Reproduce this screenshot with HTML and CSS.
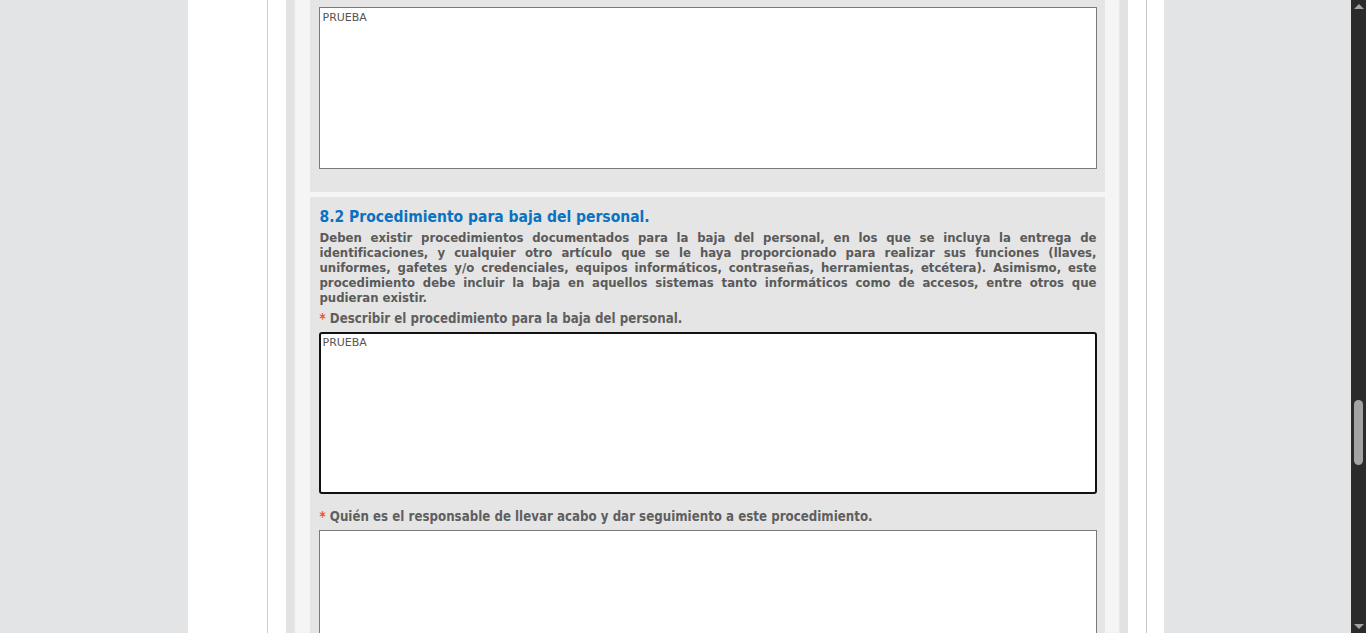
FILE: index.html
```html
<!DOCTYPE html>
<html lang="es">
<head>
<meta charset="utf-8">
<title>Formulario</title>
<link rel="stylesheet" href="styles.css">
</head>
<body>
<div class="viewport">
  <div class="page">
    <div class="frame">
      <div class="outer">
        <div class="inner">
          <section class="panel panel-top">
            <div class="field">PRUEBA</div>
          </section>
          <section class="panel">
            <h2 class="title">8.2 Procedimiento para baja del personal.</h2>
            <p class="desc">
              <span class="ln">Deben existir procedimientos documentados para la baja del personal, en los que se incluya la entrega de</span>
              <span class="ln">identificaciones, y cualquier otro artículo que se le haya proporcionado para realizar sus funciones (llaves,</span>
              <span class="ln">uniformes, gafetes y/o credenciales, equipos informáticos, contraseñas, herramientas, etcétera). Asimismo, este</span>
              <span class="ln">procedimiento debe incluir la baja en aquellos sistemas tanto informáticos como de accesos, entre otros que</span>
              <span class="ln last">pudieran existir.</span>
            </p>
            <div class="label"><span class="req">*</span> Describir el procedimiento para la baja del personal.</div>
            <div class="field focused">PRUEBA</div>
            <div class="label label-2"><span class="req">*</span> Quién es el responsable de llevar acabo y dar seguimiento a este procedimiento.</div>
            <div class="field"></div>
          </section>
        </div>
      </div>
    </div>
  </div>
  <div class="scrollbar">
    <div class="arrow up"></div>
    <div class="track"><div class="thumb"></div></div>
    <div class="arrow down"></div>
  </div>
</div>
</body>
</html>
```
FILE: styles.css
```css
html, body {
  margin: 0;
  padding: 0;
  height: 100%;
  overflow: hidden;
}
body {
  background: #e3e4e6;
  font-family: "DejaVu Sans Condensed", "DejaVu Sans", sans-serif;
}
.viewport {
  display: flex;
  height: 633px;
}
.page {
  flex: 1;
  display: flex;
  justify-content: center;
  overflow: hidden;
}
.frame {
  width: 976px;
  background: #fff;
  padding-left: 79px;
  padding-right: 17px;
  box-sizing: border-box;
}
.outer {
  border-left: 1px solid #cfcfcf;
  border-right: 1px solid #cbc6c8;
  padding: 0 18px;
  height: 100%;
}
.inner {
  display: flex;
  flex-direction: column;
  height: 100%;
  background: #f5f5f5;
  border-left: 8px solid #e2e2e2;
  border-right: 8px solid #e2e2e2;
  padding: 0 15px 0 16px;
  box-shadow: inset 1px 0 1px rgba(0,0,0,0.06), inset -1px 0 1px rgba(0,0,0,0.06);
}
.panel {
  background: #e5e5e5;
  padding: 0 8px 0 9px;
  margin-top: 5px;
}
.inner > .panel:first-child { margin-top: 0; }
.panel-top {
  padding-top: 7px;
  padding-bottom: 23px;
}
.field {
  height: 162px;
  flex: none;
  box-sizing: border-box;
  background: #fff;
  border: 1px solid #7a7a7a;
  font-family: "DejaVu Sans", sans-serif;
  font-size: 11px;
  color: #555;
  padding: 3px 3px;
  line-height: 14px;
}
.field.focused {
  border: 2px solid #111;
  border-radius: 3px;
  padding: 2px 2px;
}
.title {
  margin: 0;
  padding: 11px 0 0 1px;
  font-size: 15.5px;
  line-height: 18px;
  font-weight: bold;
  color: #0a72c0;
}
.desc {
  margin: 4px 0 0 0;
  padding-left: 1px;
  font-size: 13px;
  line-height: 15px;
  font-weight: bold;
  color: #5a5a5a;
}
.ln {
  display: block;
  text-align: justify;
  text-align-last: justify;
}
.ln.last {
  text-align-last: left;
}
.label {
  margin-top: 6px;
  font-size: 13.2px;
  line-height: 15px;
  font-weight: bold;
  color: #5f5f5f;
  padding-left: 1px;
  margin-bottom: 6px;
}
.label-2 {
  margin-top: 15px;
}
.req {
  color: #f0502a;
}
.scrollbar {
  width: 15px;
  background: #2b2b2b;
  display: flex;
  flex-direction: column;
  align-items: center;
}
.arrow {
  width: 0;
  height: 0;
  border-left: 5px solid transparent;
  border-right: 5px solid transparent;
}
.arrow.up {
  margin-top: 4px;
  border-bottom: 5px solid #a3a3a3;
}
.arrow.down {
  margin-bottom: 4px;
  border-top: 5px solid #a3a3a3;
}
.track {
  flex: 1;
  width: 100%;
  display: flex;
  justify-content: center;
}
.thumb {
  width: 9px;
  height: 65px;
  margin-top: 391px;
  background: #a3a3a3;
  border-radius: 5px;
}
```
